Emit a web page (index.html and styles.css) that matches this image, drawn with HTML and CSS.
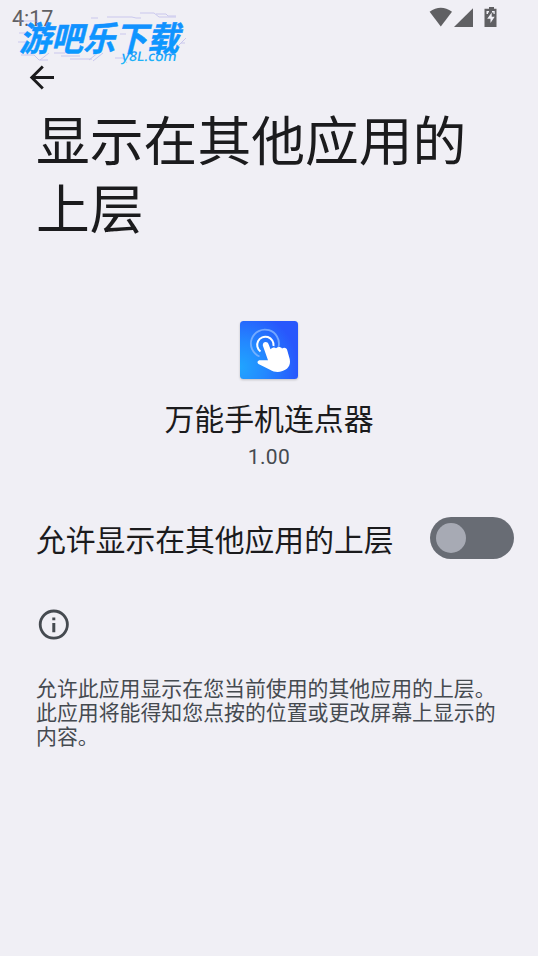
FILE: index.html
```html
<!DOCTYPE html>
<html lang="zh-CN">
<head>
<meta charset="utf-8">
<title>显示在其他应用的上层</title>
<link rel="stylesheet" href="styles.css">
</head>
<body>
<div class="screen">
  <header class="status">
    <span class="clock">4:17</span>
    <svg class="status-icons" width="70" height="24" viewBox="0 0 70 24" fill="#606063">
      <path d="M.8 11.500Q12 3.500 23.200 11.500L12 26.300Z" transform="translate(-.2 .3)"/>
      <path d="M25 27L44 8.200V27Z"/>
      <path d="M58 8.700H60.500V7H65.500V8.700H68V27H56V8.700Z" transform="translate(-.5)"/>
      <path d="M63.200 12.500L58.700 18.800H62V23L66.200 16.700H63.200ZM58 11H60.500V12.500H59.500V14H58ZM63.500 11H66.200V14H65V12.500H63.500Z" fill="#f0eff5" transform="translate(-.5)"/>
    </svg>
  </header>
  <svg class="watermark" width="180" height="62" viewBox="0 0 180 62">
    <defs>
      <linearGradient id="ink" x1="0" y1="0" x2="0" y2="1">
        <stop offset="0" stop-color="#168cff"/><stop offset="1" stop-color="#079dff"/>
      </linearGradient>
      <linearGradient id="site" x1="0" y1="0" x2="0" y2="1">
        <stop offset="0" stop-color="#1689ff"/><stop offset="1" stop-color="#20bdf5"/>
      </linearGradient>
    </defs>
    <g class="circuit">
      <path d="M8 11H28M81 8H88M97 7H122L126 8H131M130 3H144L149 7H166M146 4H156L158 6H166"/>
      <path d="M9 23H15M8 32H17M11 45H24L29 50H38M44 43H55M51 46H70M60 49H82M110 24H116M105 48H113L117 53M165 39L176 28M171 33H175M79 50L89 42M83 51L93 43M30 50L39 43"/>
    </g>
    <text class="mark-name" transform="translate(9 40.500) skewX(-14)" textLength="160" lengthAdjust="spacingAndGlyphs" fill="url(#ink)">游吧乐下载</text>
    <text class="mark-site" transform="translate(111 51) skewX(-10)" textLength="55" lengthAdjust="spacingAndGlyphs" fill="url(#site)">y8L.com</text>
  </svg>
  <nav class="bar">
    <svg width="26" height="26" viewBox="0 0 26 26" fill="none" stroke="#1b1b1d" stroke-width="2.900">
      <path d="M13.800 1.500L2.800 12.500L13.800 23.500M2.800 12.500H25"/>
    </svg>
  </nav>
  <main>
    <h1>显示在其他应用的上层</h1>
    <section class="app">
      <svg class="app-icon" width="58" height="58" viewBox="0 0 58 58">
        <defs>
          <radialGradient id="tile" cx="0" cy=".8" r="1">
            <stop offset="0" stop-color="#20a5ff"/><stop offset=".45" stop-color="#2388ff"/><stop offset="1" stop-color="#2857fc"/>
          </radialGradient>
        </defs>
        <rect width="58" height="58" rx="3.500" fill="url(#tile)"/>
        <path d="M19.500 35.500A14 14 0 1 1 38.500 26" fill="none" stroke="#8fbcff" stroke-width="1.800" opacity=".75"/>
        <path d="M20.500 30.500A8.200 8.200 0 1 1 33.500 25" fill="none" stroke="#fff" stroke-width="2"/>
        <path d="M22.800 24.500C22.500 20.200 27.800 20 28.700 23.500L30.500 28.300C32.500 26 35 26 36 27.200C38 25.500 41 25.800 42 27.600C44.500 26 46.800 27.200 47.300 29.500L49.700 38C51.200 45 47 48.500 42.500 50C38 51.600 34 51 30 48.700L19.500 43.600C16 41.500 17.500 38.700 21 39.200L28 39.200Z" fill="#fff"/>
      </svg>
      <h2>万能手机连点器</h2>
      <p class="version">1.00</p>
    </section>
    <section class="permission">
      <span class="label">允许显示在其他应用的上层</span>
      <span class="switch" role="switch" aria-checked="false"><span class="thumb"></span></span>
    </section>
    <svg class="info" width="32" height="32" viewBox="0 0 32 32" fill="#454a50">
      <circle cx="15.800" cy="15.600" r="13.600" fill="none" stroke="#454a50" stroke-width="2.800"/>
      <path d="M14.300 8.400H17.300V11.300H14.300ZM14.300 14H17.300V23.200H14.300Z"/>
    </svg>
    <p class="note">允许此应用显示在您当前使用的其他应用的上层。此应用将能得知您点按的位置或更改屏幕上显示的内容。</p>
  </main>
</div>
</body>
</html>
```
FILE: styles.css
```css
* { box-sizing: border-box; }
body, h1, h2, p { margin: 0; font-weight: 400; }
body {
  background: #f0eff5;
  color: #1b1b1d;
  font-family: Roboto, "Noto Sans CJK SC", sans-serif;
}
svg { display: block; overflow: visible; }
.screen { position: relative; width: 538px; height: 956px; overflow: hidden; }
.status {
  display: flex;
  justify-content: space-between;
  height: 36px;
  padding: 0 39px 0 12px;
}
.clock { color: #606063; font-size: 21.5px; line-height: 38px; }
.watermark { position: absolute; left: 10px; top: 10px; }
.mark-name { font: 700 34px "Noto Sans CJK SC", sans-serif; stroke: #1092ff; stroke-width: .5px; }
.mark-site { font: 600 13.5px "Open Sans", sans-serif; }
.circuit { fill: none; stroke: #aaa8e8; stroke-width: 1; opacity: .55; }
.bar { padding: 29px 0 0 29px; height: 68px; }
main { padding: 0 24px 0 36px; }
h1 {
  width: 440px;
  font-family: "Noto Sans CJK SC", sans-serif;
  font-size: 53.8px;
  line-height: 68px;
}
.app {
  display: flex;
  flex-direction: column;
  align-items: center;
  margin: 80.5px -12px 0 -24px;
}
.app-icon { filter: drop-shadow(0 1px 1px #0003); }
h2 { margin-top: 21.5px; font-size: 29.9px; line-height: 40px; }
.version { color: #454a50; font-size: 21px; line-height: 28px; letter-spacing: .4px; margin-top: 3px; }
.permission {
  display: flex;
  align-items: flex-start;
  justify-content: space-between;
  margin-top: 46px;
  height: 42px;
}
.label { font-size: 29.8px; line-height: 42px; padding-top: 3px; white-space: nowrap; }
.switch {
  display: flex;
  align-items: center;
  width: 84px;
  height: 42px;
  padding-left: 6px;
  border-radius: 21px;
  background: #686c74;
}
.thumb { width: 30px; height: 30px; border-radius: 50%; background: #a7aab4; }
.info { margin: 50px 0 0 2px; }
.note {
  width: 466px;
  margin-top: 33.5px;
  color: #454a50;
  font-family: "Noto Sans CJK SC", sans-serif;
  font-size: 20.9px;
  line-height: 24px;
}
```
